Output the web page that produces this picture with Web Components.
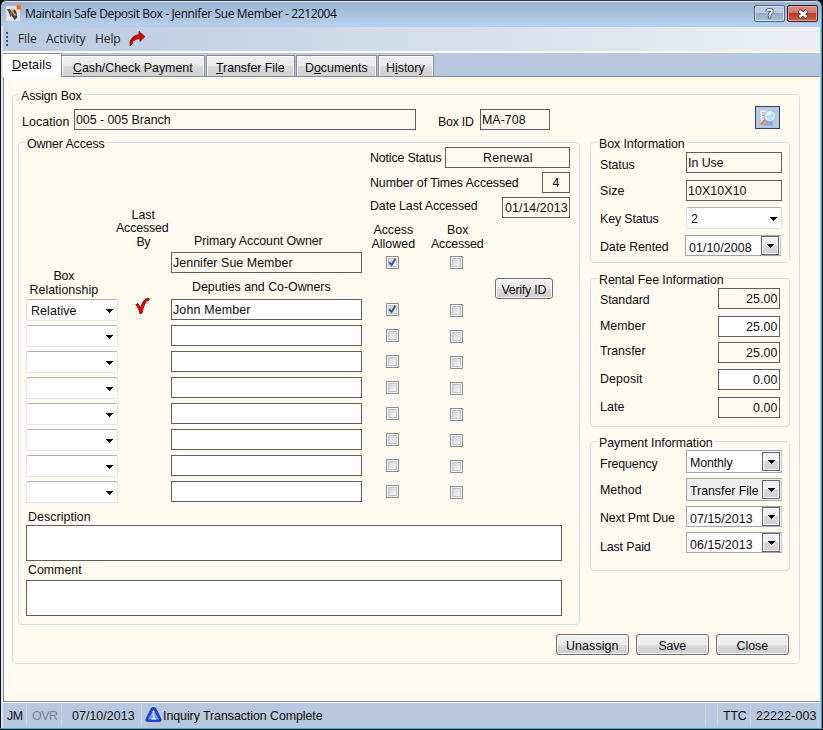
<!DOCTYPE html>
<html lang="en"><head><meta charset="utf-8"><title>Maintain Safe Deposit Box</title>
<style>
html,body{margin:0;padding:0;background:#000;overflow:hidden}
body{width:823px;height:730px;font:12.4px/14px "Liberation Sans",Arial,sans-serif;color:#0c0c0c}
</style></head><body>
<safe-box-window></safe-box-window>
<script>
const define=(name,css,html,init)=>customElements.define(name,class extends HTMLElement{
  constructor(){super();this.attachShadow({mode:'open'})}
  connectedCallback(){
    if(this.shadowRoot.childNodes.length)return;
    this.shadowRoot.innerHTML=`<style>:host{box-sizing:border-box}*{box-sizing:border-box}${css}</style>`+(typeof html==='function'?html(this):html);
    if(init)init(this);
  }
});
const ARROW='<svg width="7" height="4" viewBox="0 0 7 4" shape-rendering="crispEdges"><path d="M0 0H7V1H6V2H5V3H4V4H3V3H2V2H1V1H0Z" fill="#000"/></svg>';

/* Text run spread over the width given in w */
define('ui-text',':host{display:block;flex:none;white-space:pre;height:14px;line-height:14px}span{display:inline-block}::slotted(u){text-underline-offset:1px;text-decoration-thickness:1px}','<span><slot></slot></span>',el=>{
  const w=+el.getAttribute('w');if(!w)return;
  const s=el.shadowRoot.querySelector('span'),n=s.getBoundingClientRect().width,c=el.textContent.length;
  if(c>1)s.style.letterSpacing=((w-.4-n)/c)+'px';
  el.style.width=w+'px';
});
define('ui-field',`:host{display:flex;flex:none;height:21px;border:1px solid #5f5f5f;padding:3px 0 0 1px;background:#fffbf0}
:host([edit]){background:#fff}:host([num]){justify-content:flex-end;padding-right:1px}:host([mid]){justify-content:center}`,'<slot></slot>');
define('ui-combo',`:host{display:flex;flex:none;height:22px;border:1px solid #dfe4ee;border-top-color:#b4b6bc;border-radius:2px;background:#fff;padding:4px 4px 0;justify-content:space-between}
svg{margin-top:5px;flex:none}`,'<div><slot></slot></div>'+ARROW);
define('ui-picker',`:host{display:flex;flex:none;height:21px;border:1px solid #a3a5ac;border-right-color:#c3c5cc;background:#fff;justify-content:space-between;padding:0 0 0 3px}
:host([grey]){background:#f0f0f0}
.t{padding-top:5px}.b{width:18px;margin:0 1px 0 0;border:1px solid #62656b;box-shadow:inset 0 0 0 1px #f8f8f8;background:linear-gradient(#f1f1f1 48%,#dadada 50%,#cfcfcf);display:flex;align-items:center;justify-content:center}
:host([tall]){height:23px}:host([tall]) .b{margin:1px 1px 1px 0}`,'<div class="t"><slot></slot></div><div class="b">'+ARROW+'</div>');
define('ui-check',`:host{display:block;flex:none;width:13px;height:13px;border:1px solid #8e8f8f;background:#f6f6f6;padding:1px}
div{width:9px;height:9px;border:1px solid #c3c7cb;background:linear-gradient(135deg,#cfd3d8,#f6f6f6)}svg{display:block;margin:-1px}`,
  el=>'<div>'+(el.hasAttribute('on')?'<svg width="9" height="9" viewBox="0 0 9 9"><path d="M1.3 4.2L3.6 7L7.3 .8" fill="none" stroke="#3c559d" stroke-width="1.9"/></svg>':'')+'</div>');
define('ui-button',`:host{display:flex;flex:none;justify-content:center;height:21px;border:1px solid #707070;border-radius:3px;padding-top:4px;background:linear-gradient(#f3f3f3,#ebebeb 50%,#dcdcdc 51%,#cdcdcd);box-shadow:inset 0 0 0 1px #fafafa}`,'<slot></slot>');
define('ui-group',`:host{display:flex;flex-direction:column;flex:none;position:relative;border:1px solid #d3dfec;border-radius:4px}
.l{position:absolute;left:7px;top:-6px;background:#fffbf0;padding:0 2px 0 1px;height:14px}`,'<div class="l"><slot name="legend"></slot></div><slot></slot>');
define('ui-tab',`:host{display:flex;flex:none;height:21px;margin:2px 1px 0 0;border:1px solid #868c99;border-bottom:0;background:linear-gradient(#f1f1f1,#e9e9e9 48%,#dadada 52%,#d0d0d0);box-shadow:inset 1px 1px 0 #fbfbfb,inset -1px 0 0 #fbfbfb;padding-top:5px}
:host([active]){background:#fff;height:24px;margin:0 0 0 0;padding-top:4px;box-shadow:none;border-left:0}`,'<slot></slot>');
/* Labelled line of the right-hand groups */
define('form-line',':host{display:flex;flex:none;justify-content:space-between;align-items:flex-start}','<slot name="label"></slot><slot></slot>');
define('tick-mark',':host{display:block;width:15px;height:17px;flex:none}','<svg width="15" height="17" viewBox="0 0 15 17"><path d="M.7 6.8L3 5.6L5.4 10.3C6.6 5.6 9 2 11.3 .6L14.3 .8L14 2.1C10.5 2.6 8.3 8.4 7 15L5 15.8C4.3 12 2.8 8.2 .7 6.8Z" fill="#f00" stroke="#8e0000" stroke-width="1"/></svg>');

define('title-bar',`:host{display:flex;height:26px;flex:none;border-top:1px solid #35353b;box-shadow:inset 0 1px #dce7f4;background:linear-gradient(#98b1cf,#a4bedc 45%,#b8d0ec);border-radius:6px 6px 0 0;padding:4px 3px 0 5px;font:12px/14px "Open Sans","Noto Sans",sans-serif}
.app{flex:none;width:16px;height:18px}ui-text{margin:2px 0 0 3px}.sp{flex:1}
.btn{width:31px;height:17px;flex:none;margin-left:2px;border:1px solid #56677e;border-radius:2px;box-shadow:inset 0 0 0 1px #cfe0f2;background:linear-gradient(#b9cce3 46%,#93abc8 50%,#a8c3e1);display:flex;justify-content:center;align-items:center}
.x{border-color:#461a20;box-shadow:inset 0 0 0 1px #e4a496;background:linear-gradient(#dc9185,#cf7668 46%,#b83c25 50%,#cc5f42)}`,
`<svg class="app" viewBox="0 0 16 18"><path d="M0 1H14V16H0Z" fill="#e6e2e0"/><path d="M1 4L4 4L6 7L4.5 12L3 8Z" fill="#4c5058"/><path d="M8 4L10 6L11.5 12L9 15L5 10Z" fill="#39414e"/><path d="M5 4L7 5L8 7.5L11 10.5L9 11L6 8Z" fill="#f2873a"/><path d="M10.5 0H15V4.5H10.5Z" fill="#ff6c0c"/></svg>
<ui-text w="312">Maintain Safe Deposit Box - Jennifer Sue Member - 2212004</ui-text><div class="sp"></div>
<div class="btn"><svg width="9" height="11" viewBox="0 0 9 11"><path d="M2 3.6C2 1 7 1 7 3.4C7 5 4.6 5 4.6 7M4.6 8.2V10.4" fill="none" stroke="#3f4c5e" stroke-width="3.4"/><path d="M2 3.6C2 1 7 1 7 3.4C7 5 4.6 5 4.6 7M4.6 8.2V9.8" fill="none" stroke="#fff" stroke-width="1.7"/></svg></div>
<div class="btn x"><svg width="12" height="10" viewBox="0 0 12 10"><path d="M2 1.6L10 8.4M10 1.6L2 8.4" stroke="#544049" stroke-width="4.4"/><path d="M2.4 2L9.6 8M9.6 2L2.4 8" stroke="#fff" stroke-width="2.4"/></svg></div>`);
define('menu-bar',`:host{display:flex;height:25px;flex:none;background:linear-gradient(90deg,#b9cae2,#ecf0f5);padding:5px 0 0 3px;font:12px/14px "Open Sans","Noto Sans",sans-serif;color:#222;border-top:1px solid #b7cbe6}
.grip{width:2px;height:14px;margin:0 10px 0 0;background:repeating-linear-gradient(#3f527c 0 2px,transparent 2px 4px)}
ui-text{margin-right:9px}svg{margin:-1px 0 0 -1px}`,
`<div class="grip"></div><ui-text w="19">File</ui-text><ui-text w="40">Activity</ui-text><ui-text w="26">Help</ui-text>
<svg width="17" height="16" viewBox="0 0 17 16"><path d="M1 15C.3 9 3.5 4.5 10 3.5V.5L15.8 5.4L11 10.6V7.8C6.5 7.6 3.8 9.5 3 13Z" fill="#d30000" stroke="#860000" stroke-width=".7"/></svg>`);
define('tab-strip',`:host{display:flex;flex:none;height:26px;background:linear-gradient(#fffbf0 2px,#b8c9df 2px,#b8c9df 25px,#868c99 25px);padding-top:2px}`,
`<ui-tab active style="width:59px;padding-left:9px"><ui-text w="40" style="font-size:12.6px"><u>D</u>etails</ui-text></ui-tab>
<ui-tab style="width:144px;padding-left:11px;margin-left:-1px"><ui-text w="120"><u>C</u>ash/Check Payment</ui-text></ui-tab>
<ui-tab style="width:89px;padding-left:9px"><ui-text w="69"><u>T</u>ransfer File</ui-text></ui-tab>
<ui-tab style="width:81px;padding-left:8px"><ui-text w="63">D<u>o</u>cuments</ui-text></ui-tab>
<ui-tab style="width:56px;padding-left:7px"><ui-text w="39">H<u>i</u>story</ui-text></ui-tab>`);

const rep=(n,f)=>Array.from({length:n},(_,i)=>f(i)).join('');
define('owner-access',`:host{display:block;height:481px;padding-left:7px}
.body{display:flex;align-items:flex-start;height:367px}.col{display:flex;flex-direction:column;align-items:center;flex:none}
ui-combo{width:92px;margin-bottom:4px}ui-field.n{width:191px;margin-bottom:5px}
.info{display:flex;justify-content:space-between;height:25px}.info>ui-text{margin-top:4px}
.cols{display:flex;align-items:flex-start;margin-left:-1px}ui-check{margin-bottom:13px}.area{width:536px;height:36px}.lb{margin-left:2px}`,
`<div class="body">
<div class="col" style="width:92px;padding-top:126px"><ui-text w="21" style="margin-right:16px">Box</ui-text><ui-text w="69" style="margin:0 16px 2px 0">Relationship</ui-text>
<ui-combo><ui-text w="46">Relative</ui-text></ui-combo>${rep(7,()=>'<ui-combo></ui-combo>')}</div>
<div class="col" style="width:53px;padding-top:65px"><ui-text w="24" style="margin-left:-2px">Last</ui-text><ui-text w="53" style="margin:-1px 0 0 -4px">Accessed</ui-text><ui-text w="14" style="margin-left:-2px">By</ui-text><tick-mark style="margin-top:49px;margin-left:-4px"></tick-mark></div>
<div class="col" style="width:191px;padding-top:91px"><ui-text w="129" style="margin-left:-16px">Primary Account Owner</ui-text>
<ui-field class="n" style="margin:4px 0 8px"><ui-text w="120">Jennifer Sue Member</ui-text></ui-field><ui-text w="139" style="margin:-1px 10px 5px 0">Deputies and Co-Owners</ui-text>
<ui-field edit class="n"><ui-text w="78">John Member</ui-text></ui-field>${rep(7,()=>'<ui-field edit class="n"></ui-field>')}</div>
<div class="right" style="width:200px;padding-top:4px;margin-left:8px">
<div class="info"><ui-text w="72">Notice Status</ui-text><ui-field mid style="width:125px"><ui-text w="50">Renewal</ui-text></ui-field></div>
<div class="info"><ui-text w="149">Number of Times Accessed</ui-text><ui-field mid style="width:28px"><ui-text w="8">4</ui-text></ui-field></div>
<div class="info"><ui-text w="108" style="margin-top:2px">Date Last Accessed</ui-text><ui-field mid style="width:68px"><ui-text w="63">01/14/2013</ui-text></ui-field></div>
<div class="cols"><div class="col" style="width:46px;padding-top:1px"><ui-text w="40" style="margin-left:3px">Access</ui-text><ui-text w="44" style="margin:0 0 5px 3px">Allowed</ui-text><ui-check on style="margin-bottom:34px"></ui-check><ui-check on></ui-check>${rep(7,()=>'<ui-check></ui-check>')}</div>
<div class="col" style="width:54px;margin-left:14px;padding-top:1px"><ui-text w="22" style="margin-left:4px">Box</ui-text><ui-text w="53" style="margin:0 0 5px 3px">Accessed</ui-text><ui-check style="margin-bottom:35px"></ui-check>${rep(8,()=>'<ui-check></ui-check>')}</div>
<ui-button style="width:58px;margin:56px 0 0 12px"><ui-text w="45">Verify ID</ui-text></ui-button></div>
</div></div>
<ui-text class="lb" w="63">Description</ui-text><ui-field edit class="area" style="margin-top:1px"></ui-field>
<ui-text class="lb" w="54" style="margin-top:2px">Comment</ui-text><ui-field edit class="area" style="margin-top:3px"></ui-field>`);

const line=(label,w,lm,h,ctl)=>`<form-line style="height:${h}px"><ui-text slot="label" w="${w}" style="margin-top:${lm}px">${label}</ui-text>${ctl}</form-line>`;
define('side-panels',`:host{display:block;width:200px}ui-group{padding:0 7px 0 9px}.v{width:96px}.m{width:62px}`,
`<ui-group style="height:121px;padding-top:9px"><ui-text slot="legend" w="86">Box Information</ui-text>
${line('Status',35,6,28,'<ui-field class="v"><ui-text w="36">In Use</ui-text></ui-field>')}
${line('Size',25,4,27,'<ui-field class="v"><ui-text w="59">10X10X10</ui-text></ui-field>')}
${line('Key Status',59,5,28,'<ui-combo class="v"><ui-text w="8">2</ui-text></ui-combo>')}
${line('Date Rented',69,5,21,'<ui-picker class="v" style="margin-right:1px"><ui-text w="63">01/10/2008</ui-text></ui-picker>')}</ui-group>
<ui-group style="height:149px;margin-top:15px;padding-top:9px;padding-right:9px"><ui-text slot="legend" w="125">Rental Fee Information</ui-text>
${[['Standard',50,5,28,'25.00',0],['Member',46,3,26,'25.00',1],['Transfer',46,2,27,'25.00',0],['Deposit',43,3,28,'0.00',1],['Late',25,3,21,'0.00',0]].map(r=>line(r[0],r[1],r[2],r[3],`<ui-field num class="m"${r[5]?' edit':''}><ui-text w="${r[4].length>4?32:25}">${r[4]}</ui-text></ui-field>`)).join('')}</ui-group>
<ui-group style="height:130px;margin-top:14px;padding-top:8px"><ui-text slot="legend" w="114">Payment Information</ui-text>
${line('Frequency',58,7,28,'<ui-picker tall class="v"><ui-text w="43">Monthly</ui-text></ui-picker>')}
${line('Method',42,5,28,'<ui-picker tall grey class="v"><ui-text w="69">Transfer File</ui-text></ui-picker>')}
${line('Next Pmt Due',75,5,26,'<ui-picker class="v"><ui-text w="63">07/15/2013</ui-text></ui-picker>')}
${line('Last Paid',51,8,22,'<ui-picker class="v"><ui-text w="63">06/15/2013</ui-text></ui-picker>')}</ui-group>`);
define('assign-form',`:host{display:block;padding:17px 0 0 8px;flex:1;min-height:0;background:#fffbf0;border-left:1px solid #868c99;border-bottom:1px solid #868c99}
.head{display:flex;height:47px;padding:14px 19px 0 9px;align-items:flex-start}.main{display:flex;padding-left:5px;align-items:flex-start;height:492px}
.look{margin:-3px 0 0 auto;width:25px;height:23px;border:1px solid #29426b;background:#b8c9df;display:flex;justify-content:center;align-items:center}
.buttons{display:flex;gap:7px;justify-content:flex-end;padding-right:10px}ui-button{width:73px}`,
`<ui-group style="width:788px;height:570px"><ui-text slot="legend" w="61">Assign Box</ui-text>
<div class="head"><ui-text w="48" style="margin-top:6px">Location</ui-text><ui-field style="width:342px;margin-left:4px"><ui-text w="95">005 - 005 Branch</ui-text></ui-field>
<ui-text w="36" style="margin:6px 6px 0 22px">Box ID</ui-text><ui-field style="width:70px"><ui-text w="44">MA-708</ui-text></ui-field>
<div class="look"><svg width="19" height="18" viewBox="0 0 19 18"><path d="M2 1.5H12V15H3Z" fill="#e6edf8"/><path d="M4 4H9M4 6.5H8M4 9H7" stroke="#9aaccb"/><path d="M8 11.5H14L15 16.5H5Z" fill="#86a6dc"/><path d="M7.4 10.6L3 15.6" stroke="#e5802c" stroke-width="2.2"/><circle cx="12" cy="7" r="4.8" fill="#b5e6fb" stroke="#f0f8fe" stroke-width="1.2"/><circle cx="12" cy="7" r="5.4" fill="none" stroke="#87aedb" stroke-width=".6"/><path d="M9 6.5C9.5 4.8 11 3.8 13 3.8" stroke="#fff" stroke-width="1.8" fill="none"/></svg></div></div>
<div class="main"><ui-group style="width:562px;height:483px"><ui-text slot="legend" w="78">Owner Access</ui-text><owner-access></owner-access></ui-group>
<side-panels style="margin-left:10px"></side-panels></div>
<div class="buttons"><ui-button><ui-text w="53">Unassign</ui-text></ui-button><ui-button><ui-text w="28">Save</ui-text></ui-button><ui-button><ui-text w="32">Close</ui-text></ui-button></div></ui-group>`);
define('status-bar',`:host{display:flex;flex:none;height:26px;background:#b8c9df;border-top:1px solid #fff;padding:1px 1px 2px 0}
div{border-right:1px solid #cfd4da;display:flex;padding-top:5px;flex:none}svg{margin:-2px 1px 0 3px;flex:none}`,
`<div style="width:24px;padding-left:4px"><ui-text w="16">JM</ui-text></div><div style="width:35px;padding-left:5px;color:#7b8593"><ui-text w="26">OVR</ui-text></div>
<div style="width:80px;padding-left:10px"><ui-text w="63">07/10/2013</ui-text></div>
<div style="flex:1"><svg width="17" height="16" viewBox="0 0 17 16"><path d="M6 1Q8.5-1 11 1L16.5 12Q17 14.5 14.5 15H2.5Q0 14.5 .5 12Z" fill="#1c43cf"/><path d="M8.5 3L14 12.5H3Z" fill="#6f9bfa"/><circle cx="8.5" cy="4.6" r="1.1" fill="#e8f0ff"/><path d="M7 6.8H8.8V11.3M6.5 11.8H11" stroke="#e8f0ff" stroke-width="1.3" fill="none"/></svg><ui-text w="160">Inquiry Transaction Complete</ui-text></div>
<div style="width:12px"></div><div style="width:33px;padding-left:5px"><ui-text w="24">TTC</ui-text></div><div style="width:68px;padding-left:5px"><ui-text w="61">22222-003</ui-text></div>`);
define('safe-box-window',`:host{display:block;width:823px;height:730px;background:#000}
.f{height:729px;width:822px;display:flex;flex-direction:column;border:solid;border-width:0 1px 1px 1px;border-color:#000 #18bde6 #18c4e8 #111;border-radius:7px 7px 0 0;background:#a9c1e0;overflow:hidden}
.in{flex:1;min-height:0;display:flex;flex-direction:column;margin:0 1px 0 2px;box-shadow:-2px 0 0 #dce8f6,-1px 0 0 #98b4dc}`,
`<div class="f"><title-bar></title-bar><div class="in"><menu-bar></menu-bar><tab-strip></tab-strip><assign-form></assign-form><status-bar></status-bar></div></div>`);
</script></body></html>
